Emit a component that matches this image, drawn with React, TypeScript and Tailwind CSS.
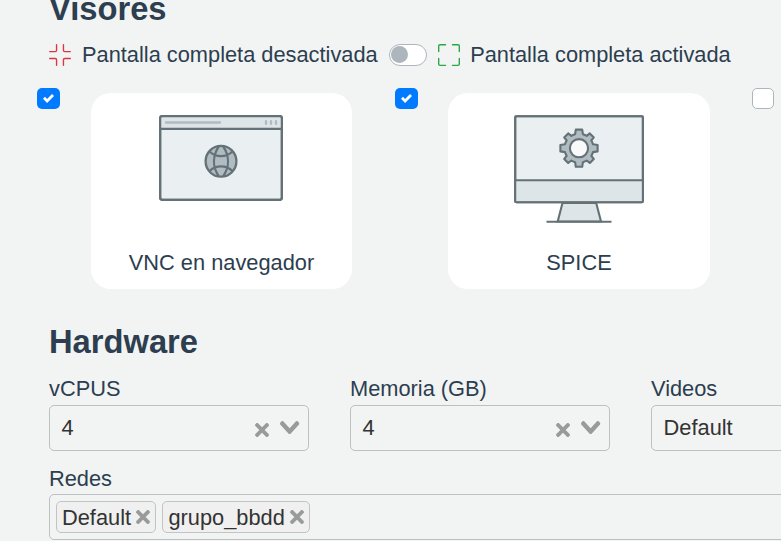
import React from "react";
import { BsFullscreen, BsFullscreenExit } from "react-icons/bs";

function Cross({ className = "" }: { className?: string }) {
  return (
    <svg viewBox="0 0 10 10" className={`h-[14px] w-[14px] shrink-0 fill-[#999b9b] ${className}`}>
      <path d="M6.895455 5l2.842897-2.842898c.348864-.348863.348864-.914488 0-1.263636L9.106534.261648c-.348864-.348864-.914489-.348864-1.263636 0L5 3.104545 2.157102.261648c-.348863-.348864-.914488-.348864-1.263636 0L.261648.893466c-.348864.348864-.348864.914489 0 1.263636L3.104545 5 .261648 7.842898c-.348864.348863-.348864.914488 0 1.263636l.631818.631818c.348864.348864.914773.348864 1.263636 0L5 6.895455l2.842898 2.842897c.348863.348864.914772.348864 1.263636 0l.631818-.631818c.348864-.348864.348864-.914489 0-1.263636L6.895455 5z" />
    </svg>
  );
}

function Chevron() {
  return (
    <svg viewBox="0 0 14 10" className="mb-[1px] h-[13.75px] w-[19.25px] shrink-0 fill-[#999b9b]">
      <path d="M9.211364 7.59931l4.48338-4.867229c.407008-.441854.407008-1.158247 0-1.60046l-.73712-.80023c-.407008-.441854-1.066904-.441854-1.474243 0L7 5.198617 2.51662.33139c-.407008-.441853-1.066904-.441853-1.474243 0l-.737121.80023c-.407008.441854-.407008 1.158248 0 1.600461l4.48338 4.867228L7 10l2.211364-2.40069z" />
    </svg>
  );
}

function Checkbox({ checked }: { checked: boolean }) {
  return (
    <span
      className={
        checked
          ? "mt-[-5px] flex h-[21px] w-[22.5px] shrink-0 items-center justify-center rounded-[5px] bg-[#007bff]"
          : "mt-[-5px] flex h-[21px] w-[22px] shrink-0 rounded-[5px] border border-[#adb5bd] bg-white"
      }
    >
      {checked && (
        <svg viewBox="0 0 8 8" className="h-[11px] w-[11px] fill-white">
          <path d="M6.564.75l-3.59 3.612-1.538-1.55L0 4.26l2.974 2.99L8 2.193z" />
        </svg>
      )}
    </span>
  );
}

function BrowserDrawing() {
  return (
    <svg viewBox="159 115 124 86" className="h-[86px] w-[124px]" fill="none" stroke="#647176" strokeWidth="2.3">
      <rect x="160.1" y="116.1" width="121.8" height="83.8" rx="2.4" fill="#eaeff2" />
      <path d="M160.5 128.8V118a2 2 0 0 1 2-2h117a2 2 0 0 1 2 2v10.8z" fill="#dee5e8" stroke="none" />
      <rect x="160.1" y="116.1" width="121.8" height="83.8" rx="2.4" />
      <path d="M160 128.8h122" />
      <path d="M166 122.5h54M266 121.3v2.4M271 121.3v2.4M276 121.3v2.4" stroke="#b0bcc2" strokeWidth="2.4" strokeLinecap="round" />
      <circle cx="221" cy="161.3" r="15.4" fill="#b0bcc2" />
      <path d="M218.8 146.3C212.5 156 212.5 167 218.8 176.3M223.2 146.3C229.5 156 229.5 167 223.2 176.3M209.5 151.5C216 157.7 226 157.7 232.5 151.5M209.5 171.1C216 164.9 226 164.9 232.5 171.1" />
    </svg>
  );
}

function MonitorDrawing() {
  return (
    <svg viewBox="514 115 130 108" className="h-[108px] w-[130px]" fill="none" stroke="#647176" strokeWidth="2.1">
      <path d="M562.5 203L557.7 221.5H601L596.2 203z" fill="#dee5e8" />
      <rect x="515.2" y="116.2" width="127.7" height="86" rx="1.2" fill="#eaeff2" />
      <path d="M516 180h126v21.3H516z" fill="#dee5e8" stroke="none" />
      <rect x="515.2" y="116.2" width="127.7" height="86" rx="1.2" />
      <path d="M515 180.2h128M546.5 221.8h65" />
      <g transform="translate(579 148.2)">
        <path
          fill="#b0bcc2"
          strokeLinejoin="round"
          d="M-3.2-18.6H3.2L3.9-14Q6.2-13.3 7.7-12.3L10.8-14.8 14.8-10.8 12.3-7.7Q13.3-6.2 14-3.9L18.6-3.2V3.2L14 3.9Q13.3 6.2 12.3 7.7L14.8 10.8 10.8 14.8 7.7 12.3Q6.2 13.3 3.9 14L3.2 18.6H-3.2L-3.9 14Q-6.2 13.3-7.7 12.3L-10.8 14.8-14.8 10.8-12.3 7.7Q-13.3 6.2-14 3.9L-18.6 3.2V-3.2L-14-3.9Q-13.3-6.2-12.3-7.7L-14.8-10.8-10.8-14.8-7.7-12.3Q-6.2-13.3-3.9-14Z"
        />
        <circle r="9.1" fill="#f8f9fa" />
      </g>
    </svg>
  );
}

function Viewer({ label, children }: { label: string; children: React.ReactNode }) {
  return (
    <div className="flex h-[196px] w-full flex-col items-center justify-between rounded-[20px] bg-white pt-[22px] pb-[10px]">
      {children}
      <span className="leading-[33px]">{label}</span>
    </div>
  );
}

function Field({ label, value }: { label: string; value: string }) {
  return (
    <div className="w-[260px] shrink-0">
      <div className="leading-[33px]">{label}</div>
      <div className="flex h-[46px] items-center rounded-[5px] border border-[#bdc0c0] pr-[8.4px] pl-[11.6px] text-[#333]">
        <span className="grow pb-[2px] leading-[33px]">{value}</span>
        <Cross className="mt-[3px] mr-[11px]" />
        <Chevron />
      </div>
    </div>
  );
}

function Tag({ label }: { label: string }) {
  return (
    <span className="flex h-[32px] items-center rounded-[5px] border border-[#c2c4c4] bg-[#f0f0f0] px-[5px] text-[#333]">
      <span className="pt-px leading-[31px]">{label}</span>
      <Cross className="ml-[5.4px]" />
    </span>
  );
}

export default function App() {
  return (
    <main className="h-[541px] w-[781px] overflow-hidden bg-[#f2f4f3] pl-[49px] font-['Liberation_Sans',Arial,sans-serif] text-[21.8px] text-[#2c3e50]">
      <h2 className="mt-[-11px] h-[39px] text-[32.7px] leading-[39px] font-bold">Visores</h2>
      <div className="mt-[10px] flex h-[33px] items-center leading-[33px] whitespace-nowrap">
        <BsFullscreenExit className="mr-[11px] size-[22px] shrink-0 text-[#dc3545]" />
        <span>Pantalla completa desactivada</span>
        <span className="mr-[11px] ml-[11px] flex h-[22px] w-[38px] shrink-0 items-center rounded-full border border-[#adb5bd] bg-white pl-px">
          <span className="size-[17px] rounded-full bg-[#adb5bd]" />
        </span>
        <BsFullscreen className="mr-[10.5px] size-[22px] shrink-0 text-[#28a745]" />
        <span>Pantalla completa activada</span>
      </div>
      <div className="mt-[22px] ml-[-12px] flex items-start">
        <Checkbox checked />
        <div className="mr-[43px] ml-[31.5px] w-[261px] shrink-0">
          <Viewer label="VNC en navegador">
            <div className="mr-[1px]">
              <BrowserDrawing />
            </div>
          </Viewer>
        </div>
        <Checkbox checked />
        <div className="mr-[42px] ml-[30.5px] w-[262px] shrink-0">
          <Viewer label="SPICE">
            <MonitorDrawing />
          </Viewer>
        </div>
        <Checkbox checked={false} />
      </div>
      <h2 className="mt-[33px] h-[39px] text-[32.7px] leading-[39px] font-bold">Hardware</h2>
      <div className="mt-[11px] flex gap-[41px]">
        <Field label="vCPUS" value="4" />
        <Field label="Memoria (GB)" value="4" />
        <Field label="Videos" value="Default" />
      </div>
      <div className="mt-[12px] h-[31px] leading-[32px]">Redes</div>
      <div className="flex h-[46px] w-[862px] items-center gap-[6px] rounded-[5px] border border-[#bdc0c0] pl-[6px]">
        <Tag label="Default" />
        <Tag label="grupo_bbdd" />
      </div>
    </main>
  );
}
